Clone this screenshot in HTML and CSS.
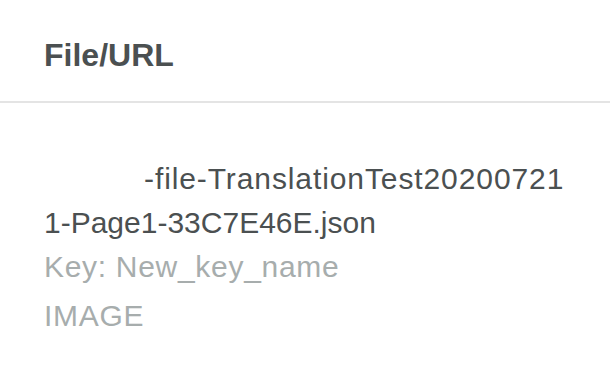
FILE: index.html
```html
<!DOCTYPE html>
<html lang="en">
<head>
<meta charset="utf-8">
<title>File/URL</title>
<link rel="stylesheet" href="styles.css">
</head>
<body>
<div class="panel">
  <div class="panel-header">
    <h2 class="panel-title">File/URL</h2>
  </div>
  <div class="panel-body">
    <div class="file-name"><span class="file-line first">-file-TranslationTest20200721</span><span class="file-line">1-Page1-33C7E46E.json</span></div>
    <div class="meta">Key: New_key_name</div>
    <div class="meta type">IMAGE</div>
  </div>
</div>
</body>
</html>
```

FILE: styles.css
```css
html, body {
  margin: 0;
  padding: 0;
  background: #ffffff;
}

body {
  font-family: "Liberation Sans", Arial, sans-serif;
  color: #4b5051;
}

.panel {
  width: 610px;
}

.panel-header {
  padding: 35px 0 26px 44px;
  border-bottom: 2px solid #e4e4e4;
}

.panel-title {
  margin: 0;
  font-size: 32px;
  line-height: 40px;
  font-weight: 700;
  color: #4b5051;
}

.panel-body {
  padding: 54px 0 0 44px;
  font-size: 30px;
  line-height: 44px;
}

.file-name {
  color: #4b5051;
}

.file-line {
  display: block;
}

.file-line.first {
  padding-left: 100px;
  letter-spacing: 0.9px;
}

.meta {
  color: #a7adad;
  letter-spacing: 0.7px;
}

.meta.type {
  margin-top: 5px;
}
```
